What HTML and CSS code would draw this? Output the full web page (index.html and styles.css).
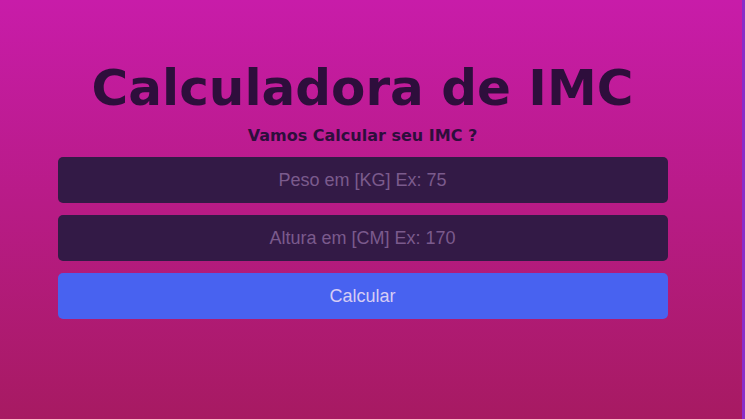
FILE: index.html
```html
<!DOCTYPE html>
<html lang="pt">
<head>
<meta charset="utf-8">
<title>Calculadora de IMC</title>
<link rel="stylesheet" href="styles.css">
</head>
<body>
<main class="app">
  <h1 class="title">Calculadora de IMC</h1>
  <p class="subtitle">Vamos Calcular seu IMC ?</p>
  <form class="form">
    <input class="field" type="text" placeholder="Peso em [KG] Ex: 75">
    <input class="field" type="text" placeholder="Altura em [CM] Ex: 170">
    <button class="btn" type="button">Calcular</button>
  </form>
</main>
</body>
</html>
```

FILE: styles.css
```css
html, body {
  margin: 0;
  height: 100%;
}
body {
  background: linear-gradient(180deg, #c81ca9 0%, #a71a62 100%);
  border-right: 3px solid #8a2cc8;
  box-sizing: border-box;
  padding-right: 17px;
  font-family: "DejaVu Sans", Verdana, sans-serif;
}
.app {
  width: 610px;
  margin: 0 auto;
  padding-top: 57px;
  display: flex;
  flex-direction: column;
  align-items: center;
}
.title {
  margin: 0;
  font-size: 50px;
  line-height: 62px;
  font-weight: bold;
  color: #2e0e3c;
}
.subtitle {
  margin: 6px 0 10px;
  font-size: 16px;
  line-height: 22px;
  font-weight: bold;
  color: #2e0e3c;
}
.form {
  width: 100%;
  display: flex;
  flex-direction: column;
  gap: 12px;
}
.field, .btn {
  width: 100%;
  height: 46px;
  box-sizing: border-box;
  border: none;
  border-radius: 5px;
  font-family: "Liberation Sans", Arial, sans-serif;
  font-size: 18px;
  text-align: center;
  outline: none;
}
.field {
  background: #331a46;
  color: #ddd;
}
.field::placeholder {
  color: #7b5a8d;
}
.btn {
  background: #4862f0;
  color: #d6cdf5;
  cursor: pointer;
}
```
